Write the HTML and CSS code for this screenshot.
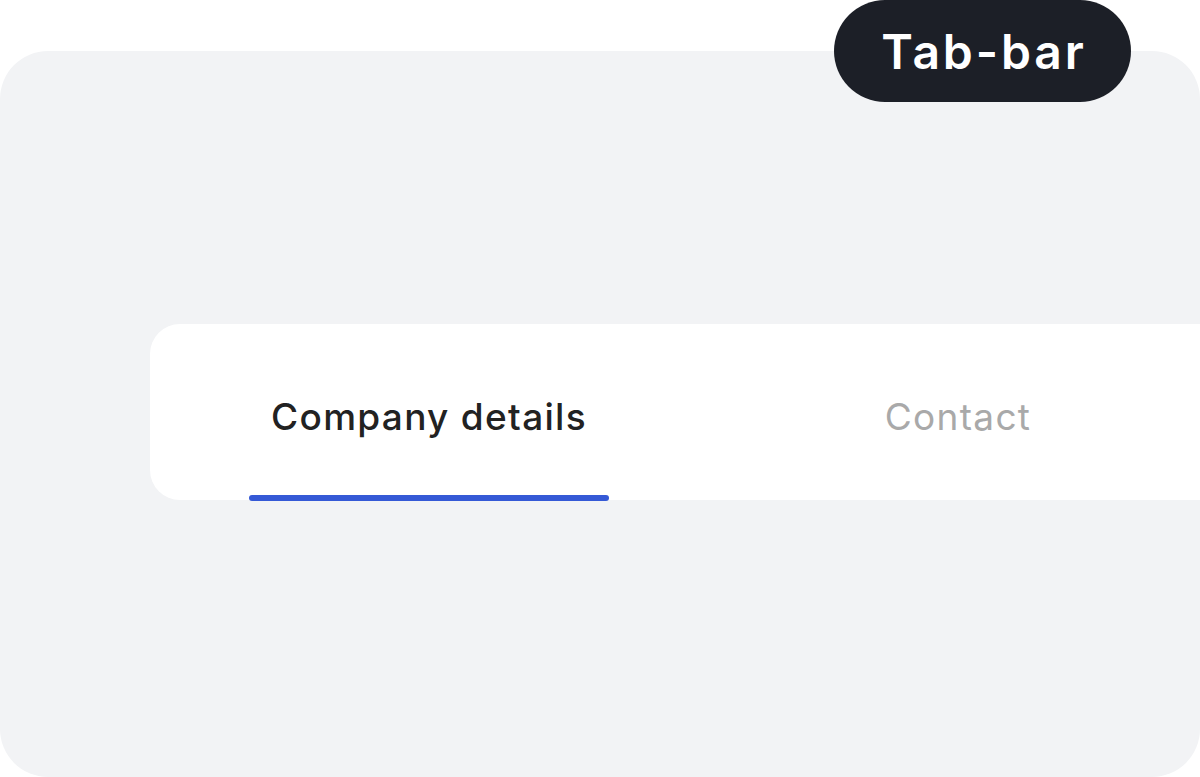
FILE: index.html
```html
<!DOCTYPE html>
<html>
<head>
<meta charset="utf-8">
<link rel="stylesheet" href="styles.css">
</head>
<body>
<div class="stage">
  <div class="panel">
    <div class="tabbar">
      <div class="tab tab-active">Company details</div>
      <div class="tab">Contact</div>
    </div>
  </div>
  <div class="badge">Tab-bar</div>
</div>
</body>
</html>
```
FILE: styles.css
```css
html, body {
  margin: 0;
  padding: 0;
  background: #ffffff;
  width: 1200px;
  height: 777px;
  overflow: hidden;
  font-family: "Inter", "DejaVu Sans", sans-serif;
}
.stage {
  position: relative;
  width: 1200px;
  height: 777px;
  padding-top: 51px;
  box-sizing: border-box;
}
.panel {
  height: 726px;
  background: #f2f3f5;
  border-radius: 48px;
  padding-top: 273px;
  padding-left: 150px;
  box-sizing: border-box;
}
.tabbar {
  height: 176px;
  background: #ffffff;
  border-radius: 30px 0 0 30px;
  display: flex;
  gap: 169px;
  padding-left: 99px;
  box-sizing: border-box;
}
.tab {
  width: 360px;
  height: 176px;
  display: flex;
  align-items: center;
  justify-content: center;
  font-size: 37px;
  font-weight: 400;
  color: #a9a9a9;
  padding-top: 8px;
  box-sizing: border-box;
  position: relative;
  letter-spacing: 1.3px;
}
.tab-active {
  color: #222222;
  font-weight: 500;
}
.tab-active::after {
  content: "";
  position: absolute;
  left: 0;
  right: 0;
  bottom: -1px;
  height: 6px;
  border-radius: 3px;
  background: #3559d6;
}
.badge {
  position: absolute;
  left: 834px;
  top: 0;
  width: 297px;
  height: 102px;
  border-radius: 51px;
  background: #1c1f27;
  color: #ffffff;
  display: flex;
  align-items: center;
  justify-content: center;
  font-size: 48px;
  font-weight: 600;
  letter-spacing: 2.9px;
  padding-left: 3px;
  box-sizing: border-box;
}
```
